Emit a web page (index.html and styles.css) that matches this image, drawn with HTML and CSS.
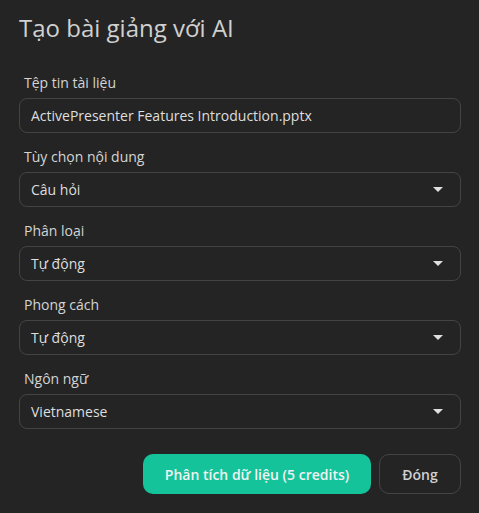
FILE: index.html
```html
<!DOCTYPE html>
<html lang="vi">
<head>
<meta charset="utf-8">
<link rel="stylesheet" href="styles.css">
</head>
<body>
<div class="dialog">
  <h1 class="title">Tạo bài giảng với AI</h1>
  <div class="field">
    <div class="label">Tệp tin tài liệu</div>
    <div class="input">ActivePresenter Features Introduction.pptx</div>
  </div>
  <div class="field">
    <div class="label">Tùy chọn nội dung</div>
    <div class="input select"><span>Câu hỏi</span><i class="caret"></i></div>
  </div>
  <div class="field">
    <div class="label">Phân loại</div>
    <div class="input select"><span>Tự động</span><i class="caret"></i></div>
  </div>
  <div class="field">
    <div class="label">Phong cách</div>
    <div class="input select"><span>Tự động</span><i class="caret"></i></div>
  </div>
  <div class="field">
    <div class="label">Ngôn ngữ</div>
    <div class="input select"><span>Vietnamese</span><i class="caret"></i></div>
  </div>
  <div class="actions">
    <button class="btn primary">Phân tích dữ liệu (5 credits)</button>
    <button class="btn secondary">Đóng</button>
  </div>
</div>
</body>
</html>
```
FILE: styles.css
```css
* { box-sizing: border-box; }
html, body {
  margin: 0;
  background: #242424;
  font-family: "Open Sans", "Noto Sans", sans-serif;
  color: #d6d6d6;
}
.dialog {
  width: 479px;
  padding: 12px 18px 0 19px;
  display: flex;
  flex-direction: column;
}
.title {
  margin: 0 0 29px 0;
  font-size: 24px;
  font-weight: 400;
  line-height: 32px;
  color: #d0d0d0;
}
.field {
  display: flex;
  flex-direction: column;
  margin-bottom: 14px;
}
.label {
  font-size: 14px;
  line-height: 20px;
  padding-left: 5px;
  margin-bottom: 5px;
  color: #d4d4d4;
}
.input {
  height: 35px;
  border: 1px solid #444444;
  border-radius: 8px;
  padding: 0 17px 0 11px;
  font-size: 14px;
  display: flex;
  align-items: center;
  color: #dedede;
}
.select { justify-content: space-between; }
.caret {
  width: 0;
  height: 0;
  border-left: 5px solid transparent;
  border-right: 5px solid transparent;
  border-top: 5px solid #e0e0e0;
}
.actions {
  display: flex;
  justify-content: flex-end;
  gap: 8px;
  margin-top: 11px;
}
.btn {
  height: 40px;
  border-radius: 10px;
  font-family: "Open Sans", "Noto Sans", sans-serif;
  font-size: 14px;
  font-weight: 600;
  cursor: pointer;
}
.primary {
  width: 228px;
  background: #14c39a;
  border: none;
  color: #f2f2f2;
}
.secondary {
  width: 82px;
  background: transparent;
  border: 1px solid #444444;
  color: #d0d0d0;
}
```
